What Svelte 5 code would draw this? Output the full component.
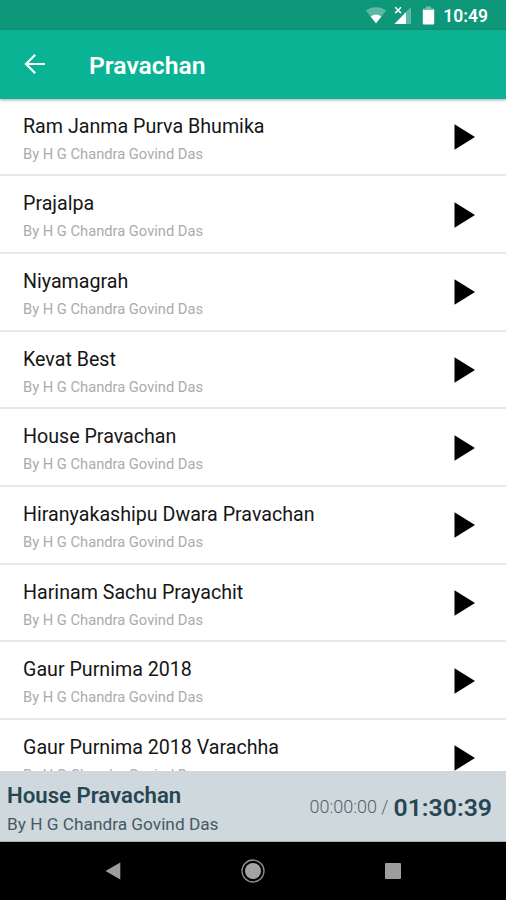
<script>
  const author = 'By H G Chandra Govind Das';
  const tracks = [
    'Ram Janma Purva Bhumika',
    'Prajalpa',
    'Niyamagrah',
    'Kevat Best',
    'House Pravachan',
    'Hiranyakashipu Dwara Pravachan',
    'Harinam Sachu Prayachit',
    'Gaur Purnima 2018',
    'Gaur Purnima 2018 Varachha'
  ];
</script>

<div class="screen">
  <div class="status">
    <svg class="wifi" width="22" height="18" viewBox="0 0 22 18">
      <path d="M11 17.300 .8 4.600C6.500 .1 15.500 .1 21.200 4.600Z" fill="#fff" fill-opacity=".32" />
      <path d="M11 17.300 5.700 10.700C8.600 8.100 13.400 8.100 16.300 10.700Z" fill="#fff" />
    </svg>
    <svg class="cell" width="18" height="19" viewBox="0 0 18 19">
      <path d="M17 1V18H12V6Z" fill="#fff" fill-opacity=".32" />
      <path d="M12 6V18H.4Z" fill="#fff" />
      <path d="M1.200 1.300 7 7.100M7 1.300 1.200 7.100" stroke="#fff" stroke-width="1.500" />
    </svg>
    <svg class="battery" width="13" height="19" viewBox="0 0 13 19">
      <path d="M4 .5H9V2.500H12.200V4.500H.8V2.500H4Z" fill="#fff" fill-opacity=".4" />
      <path d="M.8 4H12.200V17.500Q12.200 18.500 11.200 18.500H1.800Q.8 18.500 .8 17.500Z" fill="#fff" />
    </svg>
    <span class="clock">10:49</span>
  </div>
  <header class="bar">
    <svg class="back" width="22" height="22" viewBox="0 0 22 22" fill="none" stroke="#fff" stroke-width="2.200">
      <path d="M21 11H2.500M11.200 1.800 2 11l9.200 9.200" />
    </svg>
    <h1>Pravachan</h1>
  </header>
  <main class="list">
    {#each tracks as track}
      <div class="row">
        <div class="info">
          <div class="title">{track}</div>
          <div class="author">{author}</div>
        </div>
        <svg class="play" width="22" height="26" viewBox="0 0 22 26"><path d="M.5 .3 21 13 .5 25.700Z" /></svg>
      </div>
    {/each}
  </main>
  <section class="player">
    <div>
      <div class="now">House Pravachan</div>
      <div class="by">{author}</div>
    </div>
    <div class="time"><span class="elapsed">00:00:00 /</span><span class="total">01:30:39</span></div>
  </section>
  <nav class="nav">
    <svg width="16" height="18" viewBox="0 0 16 18"><path d="M15.300 .5V17.500L.5 9Z" fill="#9e9e9e" /></svg>
    <svg width="24" height="24" viewBox="0 0 24 24">
      <circle cx="12" cy="12" r="11" fill="none" stroke="#8f8f8f" stroke-width="1.300" />
      <circle cx="12" cy="12" r="8" fill="#a3a3a3" />
    </svg>
    <svg width="16" height="16" viewBox="0 0 16 16"><rect width="16" height="16" rx="1" fill="#9e9e9e" /></svg>
  </nav>
</div>

<style>
  .screen {
    width: 506px;
    height: 900px;
    display: flex;
    flex-direction: column;
    overflow: hidden;
    background: #fff;
    font-family: Roboto, sans-serif;
  }
  .status {
    flex: none;
    height: 30px;
    box-sizing: border-box;
    padding: 6px 18px 0 0;
    display: flex;
    justify-content: flex-end;
    align-items: flex-start;
    background: #0f977a;
    color: #fff;
  }
  .cell { margin-left: 7px; }
  .battery { margin-left: 10px; }
  .clock {
    margin-left: 8px;
    font-size: 17.5px;
    line-height: 20px;
    font-weight: 600;
  }
  .bar {
    flex: none;
    height: 68.600px;
    box-sizing: border-box;
    padding: 0 0 0 24px;
    display: flex;
    align-items: center;
    gap: 43px;
    background: #09b394;
    color: #fff;
    box-shadow: 0 1px 3px rgba(0, 0, 0, .35);
    z-index: 1;
  }
  h1 {
    margin: 3px 0 0;
    font-size: 24.7px;
    line-height: 30px;
    font-weight: 600;
  }
  .list {
    flex: 1;
    min-height: 0;
    overflow: hidden;
  }
  .row {
    height: 77.67px;
    box-sizing: border-box;
    padding: 0 30px 0 23px;
    display: flex;
    justify-content: space-between;
    border-bottom: 2px solid #e8e8e8;
  }
  .info { padding-top: 15px; }
  .title {
    font-size: 19.65px;
    line-height: 25px;
    color: #161616;
    white-space: nowrap;
  }
  .author {
    margin-top: 6px;
    font-size: 14.7px;
    line-height: 18px;
    color: #ababab;
    white-space: nowrap;
  }
  .play { margin-top: 25.500px; }
  .player {
    flex: none;
    height: 71px;
    box-sizing: border-box;
    padding: 0 14px 0 7px;
    display: flex;
    justify-content: space-between;
    background: #cfd8dc;
    border-bottom: 1px solid #a5aeb1;
    color: #264653;
    white-space: nowrap;
  }
  .now {
    margin-top: 10px;
    font-size: 22.2px;
    line-height: 29px;
    font-weight: 600;
  }
  .by {
    margin-top: 3px;
    font-size: 17.25px;
    line-height: 22px;
    color: #455a64;
  }
  .time {
    display: flex;
    align-items: flex-start;
    gap: 5px;
    padding-top: 21px;
  }
  .elapsed {
    font-size: 18px;
    line-height: 30px;
    color: #52636b;
    font-weight: 300;
  }
  .total {
    font-size: 24.8px;
    line-height: 32px;
    font-weight: 600;
  }
  .nav {
    flex: none;
    height: 58px;
    box-sizing: border-box;
    padding: 0 105px 0 105px;
    display: flex;
    justify-content: space-between;
    align-items: center;
    background: #000;
  }
</style>
